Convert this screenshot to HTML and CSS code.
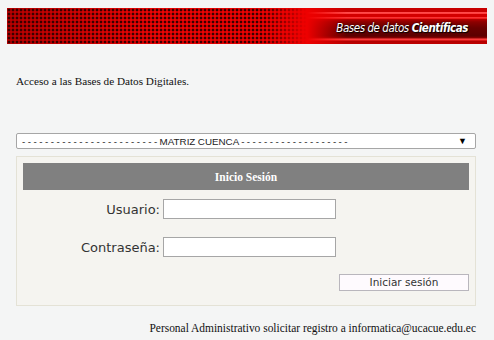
FILE: index.html
```html
<!DOCTYPE html>
<html>
<head>
<meta charset="utf-8">
<link rel="stylesheet" href="styles.css">
</head>
<body>
<div class="banner">
  <div class="banner-dots"></div>
  <div class="banner-stripes">
    <span class="banner-title">Bases de datos <b>Científicas</b></span>
  </div>
</div>
<div class="content">
  <p class="intro">Acceso a las Bases de Datos Digitales.</p>
  <div class="select">
    <span class="select-text">- - - - - - - - - - - - - - - - - - - - - - - - MATRIZ CUENCA - - - - - - - - - - - - - - - - - - -</span>
    <span class="select-arrow">▼</span>
  </div>
  <div class="panel">
    <div class="panel-head">Inicio Sesión</div>
    <div class="form">
      <label class="lbl">Usuario:</label>
      <input class="field" type="text">
      <label class="lbl">Contraseña:</label>
      <input class="field" type="password">
    </div>
    <div class="actions"><button class="btn">Iniciar sesión</button></div>
  </div>
  <p class="footer">Personal Administrativo solicitar registro a informatica@ucacue.edu.ec</p>
</div>
</body>
</html>
```
FILE: styles.css
```css
html, body { margin: 0; padding: 0; }
body {
  background: #f4f5f5;
  font-family: "Liberation Serif", "Times New Roman", serif;
  font-size: 12px;
  color: #111;
  width: 494px;
  height: 340px;
  overflow: hidden;
}
.banner {
  margin: 8px 0 0 7px;
  width: 480px;
  height: 36px;
  display: flex;
  background: #d40000;
}
.banner-dots {
  width: 300px;
  height: 100%;
  background-color: #ee0000;
  background-image:
    linear-gradient(90deg, rgba(238,0,0,0) 0px, rgba(238,0,0,0) 255px, rgba(238,0,0,1) 300px),
    radial-gradient(circle at 2px 2px, #300000 0, #420000 1.2px, rgba(0,0,0,0) 1.7px),
    linear-gradient(90deg, rgba(60,0,0,0.3), rgba(255,40,40,0.1) 150px, rgba(255,0,0,0) 300px);
  background-size: 300px 36px, 4px 4px, 300px 36px;
  background-repeat: no-repeat, repeat, no-repeat;
}
.banner-stripes {
  flex: 1;
  height: 100%;
  display: flex;
  align-items: center;
  justify-content: flex-end;
  padding-right: 19px;
  background:
    linear-gradient(90deg, rgba(238,0,0,1) 0px, rgba(238,0,0,0) 40px),
    linear-gradient(180deg,
      #c80000 0px, #c80000 4px,
      #ff5050 4px, #ff3a3a 6px,
      #d20000 6px, #d80000 9px,
      #ff4040 9px, #e81010 11px,
      #b80000 11px, #8c0000 14px,
      #6a0000 20px, #5c0000 28px,
      #900000 30px, #ff4848 31px,
      #ff3030 32px, #b00000 33px,
      #c00000 36px);
}
.banner-title {
  font-family: "DejaVu Sans Condensed", "DejaVu Sans", sans-serif;
  font-stretch: condensed;
  font-style: italic;
  font-size: 11.5px;
  color: #fff;
  text-shadow: 1px 1px 1px #000, 0 0 2px #200;
  letter-spacing: -0.45px;
  position: relative;
  top: 2px;
}
.banner-title b { font-weight: bold; }
.content {
  margin-left: 16px;
  width: 460px;
}
.intro {
  margin: 0;
  padding-top: 30px;
  line-height: 14px;
  font-size: 11.2px;
}
.select {
  margin-top: 45px;
  height: 14px;
  border: 1px solid #a6a6a6;
  border-radius: 2px;
  background: #fff;
  display: flex;
  align-items: center;
  padding: 0 8px 0 5px;
  font-family: "Liberation Sans", Arial, sans-serif;
  font-size: 9.8px;
  word-spacing: -0.25px;
  color: #222;
}
.select-text { flex: 1; white-space: nowrap; overflow: hidden; }
.select-arrow { font-size: 9px; color: #000; }
.panel {
  margin-top: 7px;
  border: 1px solid #e4e2d6;
  background: #f5f4f0;
  padding: 6px 6px 0 6px;
  height: 142px;
}
.panel-head {
  height: 27px;
  background: #808080;
  color: #fff;
  font-weight: bold;
  font-size: 11.5px;
  display: flex;
  align-items: center;
  justify-content: center;
}
.form {
  display: grid;
  grid-template-columns: 137px 173px;
  column-gap: 3px;
  row-gap: 18px;
  margin-top: 9px;
  align-items: center;
}
.lbl {
  text-align: right;
  font-family: "DejaVu Sans", Verdana, sans-serif;
  font-size: 13px;
  color: #333;
}
.field {
  box-sizing: border-box;
  width: 173px;
  height: 20px;
  margin: 0;
  border: 1px solid #a6a6a6;
  background: #fff;
  padding: 0 3px;
}
.actions {
  display: flex;
  justify-content: flex-end;
  margin-top: 17px;
}
.btn {
  box-sizing: border-box;
  width: 130px;
  height: 17px;
  margin: 0;
  padding: 0;
  border: 1px solid #b9b6bd;
  background: #fefafe;
  font-family: "DejaVu Sans", Verdana, sans-serif;
  font-size: 10.5px;
  color: #333;
  line-height: 15px;
}
.footer {
  margin: 0;
  padding-top: 15px;
  text-align: right;
  font-size: 11.45px;
  line-height: 14px;
}
```
